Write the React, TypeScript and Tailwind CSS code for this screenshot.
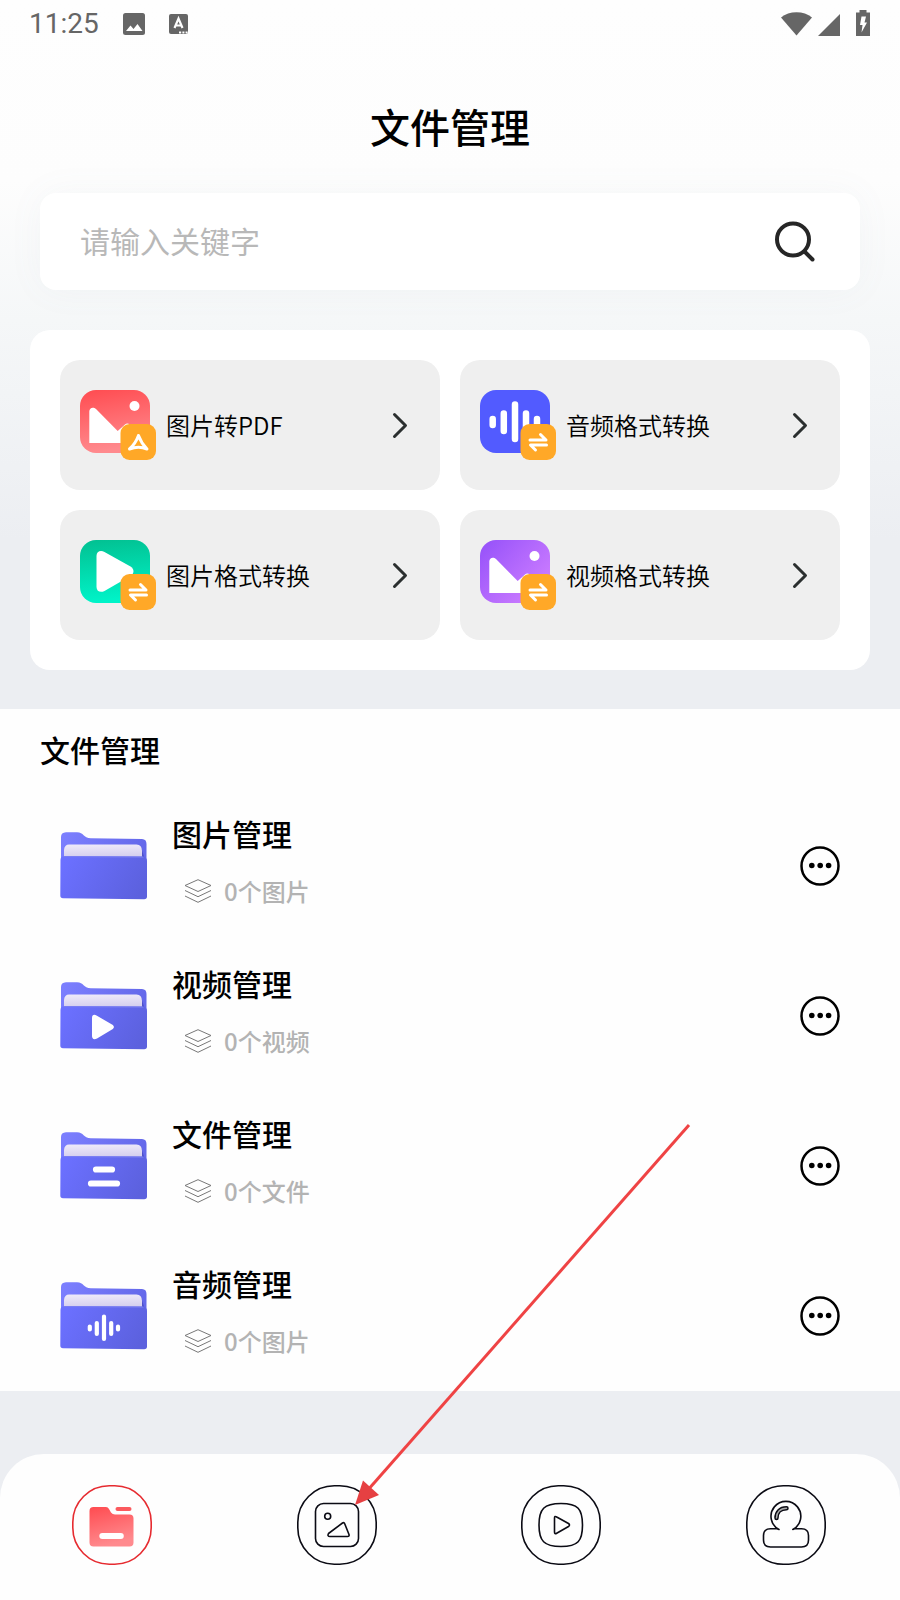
import type { ReactNode } from "react";

type FolderKind = "image" | "video" | "file" | "audio";

type Tool = {
  label: string;
  icon: ReactNode;
  badge: ReactNode;
};

type Folder = {
  title: string;
  count: string;
  kind: FolderKind;
};

const swapBadge = (
  <g fill="none" stroke="#fff" strokeWidth="3" strokeLinecap="round" strokeLinejoin="round">
    <path d="M50 50H66L60.500 44.500" />
    <path d="M66.500 55H50.500L55.500 60" />
  </g>
);

const pdfBadge = (
  <path
    d="M58.500 45.500C56.500 51 53.500 55.500 49.500 59C55 57 62 57 67 59C63.500 55.500 60.500 51 58.500 45.500Z"
    fill="none"
    stroke="#fff"
    strokeWidth="3"
    strokeLinecap="round"
    strokeLinejoin="round"
  />
);

function PictureGlyph() {
  return (
    <>
      <circle cx="54.500" cy="16" r="5" fill="#fff" />
      <path
        d="M9.300 53V21.500C9.300 17.500 13.500 16.500 16 19L37.700 41L45 34.500Q47.500 32.500 50 35V53Z"
        fill="#fff"
      />
    </>
  );
}

const tools: Tool[] = [
  {
    label: "图片转PDF",
    icon: (
      <>
        <defs>
          <linearGradient id="tool-red" x1="0" y1="0" x2="0.2" y2="1">
            <stop offset="0" stopColor="#ff4b50" />
            <stop offset="1" stopColor="#ff8a8e" />
          </linearGradient>
        </defs>
        <rect width="70" height="63" rx="16" fill="url(#tool-red)" />
        <PictureGlyph />
      </>
    ),
    badge: pdfBadge,
  },
  {
    label: "音频格式转换",
    icon: (
      <>
        <rect width="70" height="63" rx="16" fill="#525bff" />
        <path
          d="M12.700 29V35M23.800 23.500V41M35 14.500V49M46 23.500V41M57 29V35"
          stroke="#fff"
          strokeWidth="6.500"
          strokeLinecap="round"
        />
      </>
    ),
    badge: swapBadge,
  },
  {
    label: "图片格式转换",
    icon: (
      <>
        <defs>
          <linearGradient id="tool-green" x1="0" y1="0" x2="0.1" y2="1">
            <stop offset="0" stopColor="#02c091" />
            <stop offset="1" stopColor="#00f3c8" />
          </linearGradient>
        </defs>
        <rect width="70" height="63" rx="16" fill="url(#tool-green)" />
        <path
          d="M16.500 16C16.500 11.500 20.500 9.800 24.500 12L50.500 26.500C54.500 29 54.500 33.500 50.500 36L24.500 51C20.500 53 16.500 51.500 16.500 47Z"
          fill="#fff"
        />
      </>
    ),
    badge: swapBadge,
  },
  {
    label: "视频格式转换",
    icon: (
      <>
        <defs>
          <linearGradient id="tool-purple" x1="0" y1="0" x2="1" y2="0.8">
            <stop offset="0.1" stopColor="#9a55fa" />
            <stop offset="0.9" stopColor="#ca7bff" />
          </linearGradient>
        </defs>
        <rect width="70" height="63" rx="16" fill="url(#tool-purple)" />
        <PictureGlyph />
      </>
    ),
    badge: swapBadge,
  },
];

const folders: Folder[] = [
  { title: "图片管理", count: "0个图片", kind: "image" },
  { title: "视频管理", count: "0个视频", kind: "video" },
  { title: "文件管理", count: "0个文件", kind: "file" },
  { title: "音频管理", count: "0个图片", kind: "audio" },
];

function StatusBar() {
  return (
    <div className="flex h-12 items-center justify-between px-[29px] text-[#666]">
      <div className="flex items-center gap-6">
        <span className="font-[Roboto,sans-serif] text-[28px] leading-none">11:25</span>
        <svg width="22" height="22" viewBox="0 0 22 22" aria-hidden="true">
          <rect width="22" height="22" rx="2.500" fill="currentColor" />
          <path d="M3 18L7.500 12.500L10.500 16L14.500 11L19.500 18Z" fill="#fff" />
        </svg>
        <svg width="19" height="20" viewBox="0 0 19 20" aria-hidden="true">
          <rect width="19" height="20" rx="2" fill="currentColor" />
          <path
            d="M5.500 14L9.500 4.500L13.500 14M7 11.500H12"
            fill="none"
            stroke="#fff"
            strokeWidth="2.200"
          />
          <path d="M10 18.500H12.200M13.400 18.500H15.400M16.600 18.500H18.600" stroke="#fff" strokeWidth="2" />
        </svg>
      </div>
      <svg width="92" height="28" viewBox="0 0 92 28" fill="currentColor" aria-hidden="true">
        <path d="M2 7.500C10 0.500 25 0.500 33 7.500L17.500 25.500Z" />
        <path d="M39 26L61 4V26Z" />
        <path d="M80.500 0H87.500V2.500H91V26H77V2.500H80.500Z" />
        <path d="M82.500 6.500H87L85.500 12.500H88L82.500 22.500L83.500 15H81Z" fill="#fff" />
      </svg>
    </div>
  );
}

function SearchBox() {
  return (
    <form
      onSubmit={(event) => event.preventDefault()}
      className="mx-10 mt-[37px] flex h-[97px] items-center rounded-2xl bg-white pl-10 pr-11 shadow-[0_0_36px_rgba(120,140,150,0.05)]"
    >
      <input
        type="search"
        aria-label="请输入关键字"
        placeholder="请输入关键字"
        className="min-w-0 flex-1 bg-transparent pb-0.5 text-[30px] text-black outline-none placeholder:text-[#b8b8b8]"
      />
      <button type="submit" aria-label="搜索">
        <svg width="42" height="42" viewBox="0 0 42 42" fill="none" stroke="#262626" strokeWidth="4">
          <circle cx="19" cy="18.500" r="16" />
          <path d="M30.500 30.500L38.500 38.500" strokeLinecap="round" />
        </svg>
      </button>
    </form>
  );
}

function ToolCard({ tool }: { tool: Tool }) {
  return (
    <button
      type="button"
      className="flex h-[130px] items-center gap-[10px] rounded-[20px] bg-[#efefef] pl-5 pr-8 text-left"
    >
      <svg width="76" height="70" viewBox="0 0 76 70" aria-hidden="true">
        {tool.icon}
        <rect x="40.500" y="34" width="35.500" height="36" rx="9" fill="#ffa827" />
        {tool.badge}
      </svg>
      <span className="flex-1 text-2xl font-[350] text-black">{tool.label}</span>
      <svg width="16" height="28" viewBox="0 0 16 28" fill="none" aria-hidden="true">
        <path
          d="M2.500 3.500L13.500 14.500L2.500 25.500"
          stroke="#2b2f2f"
          strokeWidth="3"
          strokeLinecap="round"
          strokeLinejoin="round"
        />
      </svg>
    </button>
  );
}

function FolderMark({ kind }: { kind: FolderKind }) {
  if (kind === "video") {
    return (
      <path
        d="M32 36C32 33 34 32 36.500 33.500L52 42.500C54.500 44 54.500 46 52 47.500L37 56.500C34 58 32 57 32 54Z"
        fill="#fff"
      />
    );
  }
  if (kind === "file") {
    return (
      <path d="M36 37.500H52M31 51.500H57" stroke="#fff" strokeWidth="6.200" strokeLinecap="round" />
    );
  }
  if (kind === "audio") {
    return (
      <path
        d="M29.800 44.500V47.500M36.800 41V52M44 34.500V57M51.200 41V52M58 44.500V47.500"
        stroke="#fff"
        strokeWidth="4.200"
        strokeLinecap="round"
      />
    );
  }
  return null;
}

function FolderIcon({ kind }: { kind: FolderKind }) {
  return (
    <svg width="88" height="68" viewBox="0 0 88 68" aria-hidden="true">
      <defs>
        <linearGradient id={`back-${kind}`} x1="0" y1="0" x2="1" y2="0.2">
          <stop offset="0" stopColor="#7d80ff" />
          <stop offset="1" stopColor="#6468ea" />
        </linearGradient>
        <linearGradient id={`paper-${kind}`} x1="0.3" y1="0" x2="0.4" y2="1">
          <stop offset="0" stopColor="#efeaf9" />
          <stop offset="1" stopColor="#d3cdee" />
        </linearGradient>
        <linearGradient id={`front-${kind}`} x1="0" y1="0.3" x2="1" y2="0.6">
          <stop offset="0" stopColor="#6b70ff" />
          <stop offset="1" stopColor="#5c61de" />
        </linearGradient>
      </defs>
      <path
        d="M1 5Q1 0.500 6 0.200H17C24 0.200 23 6 31 6.200L82 7Q86.500 7.200 86.500 12V60H1Z"
        fill={`url(#back-${kind})`}
      />
      <path d="M81 15L84.500 26H80Z" fill="#4d50c8" />
      <path d="M4 25V18Q4.500 12.500 9 12.500H76.500Q82 12.500 82 19V25.500Z" fill={`url(#paper-${kind})`} />
      <path
        d="M0.500 28Q0.500 24 5 24L82 24.500Q87 24.500 87 29V64.500Q87 67.300 84 67.200L3 66.200Q0.300 66.200 0.300 63.500Z"
        fill={`url(#front-${kind})`}
      />
      <path d="M4 24.600L83 25.100" stroke="#7a7ef3" strokeWidth="1" strokeLinecap="round" />
      <FolderMark kind={kind} />
    </svg>
  );
}

function FolderRow({ folder }: { folder: Folder }) {
  return (
    <li className="flex h-[150px] items-center px-[60px]">
      <FolderIcon kind={folder.kind} />
      <div className="ml-6 flex flex-1 flex-col gap-[18px] pb-2">
        <h3 className="text-[30px] leading-10 font-medium text-black">{folder.title}</h3>
        <p className="ml-3 flex items-center gap-3 text-2xl leading-10 font-medium text-[#b3b3b3]">
          <svg
            width="28"
            height="24"
            viewBox="0 0 28 24"
            fill="none"
            stroke="#777"
            strokeLinejoin="round"
            aria-hidden="true"
          >
            <path d="M14 0.700L27 6.500L14 12.500L1 6.500Z" />
            <path d="M1 11.500L14 17.700L27 11.500M1 17L14 23.300L27 17" />
          </svg>
          {folder.count}
        </p>
      </div>
      <button type="button" aria-label={`${folder.title}更多`}>
        <svg width="40" height="40" viewBox="0 0 40 40" aria-hidden="true">
          <circle cx="20" cy="20" r="18.500" fill="none" stroke="#000" strokeWidth="2.500" />
          <circle cx="11.800" cy="19.500" r="2.800" />
          <circle cx="20.200" cy="19.500" r="2.800" />
          <circle cx="28.600" cy="19.500" r="2.800" />
        </svg>
      </button>
    </li>
  );
}

function NavButton({ label, active, children }: { label: string; active?: boolean; children: ReactNode }) {
  return (
    <button type="button" aria-label={label} aria-current={active ? "page" : undefined}>
      <svg
        width="80"
        height="80"
        viewBox="0 0 80 80"
        fill="none"
        stroke={active ? "#e62b30" : "#0b0b14"}
        strokeWidth="1.600"
        strokeLinejoin="round"
      >
        <rect x="0.800" y="0.800" width="78.400" height="78.400" rx="36.500" />
        {children}
      </svg>
    </button>
  );
}

function BottomNav() {
  return (
    <nav className="grid grow grid-cols-4 items-start justify-items-center rounded-t-[44px] bg-[#fefefe] pt-[31px] pr-0.5 pb-9">
      <NavButton label="文件" active>
        <defs>
          <linearGradient id="nav-red" x1="0" y1="0" x2="0.3" y2="1">
            <stop offset="0" stopColor="#ff4b50" />
            <stop offset="1" stopColor="#ff8a8e" />
          </linearGradient>
        </defs>
        <g stroke="none">
          <path
            d="M17.500 26Q17.500 22 21.500 22H34Q36 22 37 24L39 27.500Q40.500 29.500 43 29.500H57.500Q61.500 29.500 61.500 33.500V57.500Q61.500 61.500 57.500 61.500H21.500Q17.500 61.500 17.500 57.500Z"
            fill="url(#nav-red)"
          />
          <rect x="43.500" y="22" width="16" height="4" rx="2" fill="#fb5a5e" />
          <rect x="27.300" y="48" width="24.500" height="6" rx="3" fill="#fff" />
        </g>
      </NavButton>
      <NavButton label="图片">
        <rect x="18.500" y="18.500" width="43" height="43" rx="8" />
        <circle cx="30.700" cy="31.300" r="3" />
        <path d="M45.500 38Q47 37 47.800 39L52 49.500Q52.500 51.500 50.500 51.500H33Q30 51.500 31.500 48.500Z" />
      </NavButton>
      <NavButton label="视频">
        <path d="M40 18.500C57 18.500 61.500 24 61.500 40S57 61.500 40 61.500S18 56 18 40S23 18.500 40 18.500Z" />
        <path d="M33.500 33Q33.500 30.500 35.700 32L47.500 38.500Q49.500 40 47.500 41.500L35.700 48.200Q33.500 49.500 33.500 47Z" />
      </NavButton>
      <NavButton label="我的">
        <path d="M33 44.500A14.900 14.900 0 1 1 46.800 44.500L48.500 43.800H55.500Q62.500 43.800 62.500 50.500V55Q62.500 62 55.500 62H24.500Q17.500 62 17.500 55V50.500Q17.500 43.800 24.500 43.800H31Z" />
        <path d="M30.500 33C30.500 27.500 34 23.300 40.500 23.300" strokeWidth="4.500" strokeLinecap="round" />
        <path d="M30.500 33C30.500 27.500 34 23.300 40.500 23.300" stroke="#aaa" strokeWidth="1.500" strokeLinecap="round" />
      </NavButton>
    </nav>
  );
}

function PointerArrow() {
  return (
    <svg
      className="pointer-events-none absolute bottom-[95px] left-[355px]"
      width="336"
      height="382"
      viewBox="0 0 336 382"
      aria-hidden="true"
    >
      <path d="M334 1L12 367" stroke="#ef4344" strokeWidth="3" />
      <path d="M0 381L8 356.500L24 371Z" fill="#e64042" />
    </svg>
  );
}

export default function App() {
  return (
    <div className="relative flex min-h-screen flex-col bg-[linear-gradient(to_bottom,#fefefe_0,#fdfdfd_180px,#f5f7f8_320px,#eceef2_540px,#eceef2_100%)] font-['Noto_Sans_CJK_SC',sans-serif]">
      <StatusBar />
      <h1 className="mt-12 text-center text-[40px] leading-[60px] font-medium text-black">
        文件管理
      </h1>
      <SearchBox />
      <section className="mx-[30px] mt-10 grid grid-cols-2 gap-5 rounded-[20px] bg-white p-[30px]">
        {tools.map((tool) => (
          <ToolCard key={tool.label} tool={tool} />
        ))}
      </section>
      <section className="mt-[39px] bg-[#fefefe]">
        <h2 className="px-10 pt-5 pb-[22px] text-[30px] leading-10 font-medium text-black">文件管理</h2>
        <ul>
          {folders.map((folder) => (
            <FolderRow key={folder.kind} folder={folder} />
          ))}
        </ul>
      </section>
      <div className="flex grow flex-col pt-[63px]">
        <BottomNav />
      </div>
      <PointerArrow />
    </div>
  );
}
